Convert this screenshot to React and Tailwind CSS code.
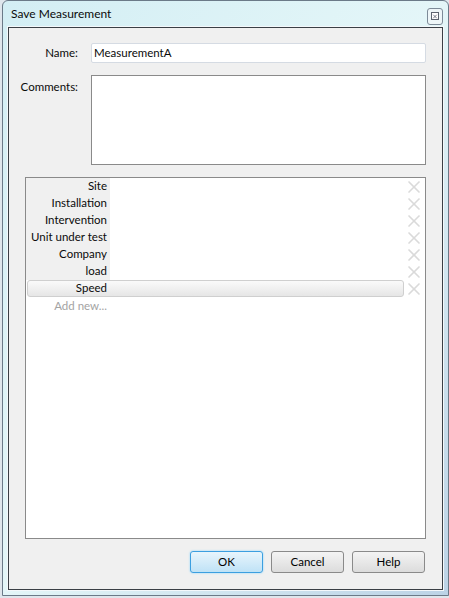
import { X } from "lucide-react"

const fields = ["Site", "Installation", "Intervention", "Unit under test", "Company", "load", "Speed"]

function Row({ label, selected }) {
    return (
        <div className="relative flex h-[17px] items-center">
            {selected && (
                <div className="absolute left-[1px] top-0 h-[17px] w-[377px] rounded-[3px] border border-[#cfcfcf] bg-gradient-to-b from-[#fafafa] to-[#e6e6e6]" />
            )}
            <div className={`relative h-full w-[84px] pr-[3px] text-right leading-[16px] ${selected ? '' : 'bg-[#f0f0f0]'}`}>
                {label}
            </div>
            <div className="flex-1" />
            <div className="relative flex w-[22px] justify-center">
                <X size={20} strokeWidth={2} className="text-[#dadada]" />
            </div>
        </div>
    )
}

function Btn({ children, primary }) {
    return (
        <button
            className={`h-[22px] w-[73px] rounded-[3px] border text-[11.5px] text-black ${
                primary
                    ? 'border-[#3c9fe0] bg-gradient-to-b from-[#e8f5fc] to-[#bfe2f6] shadow-[0_0_2px_#7fd0ff]'
                    : 'border-[#8a8a8a] bg-gradient-to-b from-[#f4f4f4] to-[#dcdcdc]'
            }`}
        >
            {children}
        </button>
    )
}

export default function App() {
    return (
        <div className="h-[598px] w-[449px] bg-[#dfe6ec] pl-[2px] font-['Lato',sans-serif] text-[11.5px] text-[#0a0a0a]">
            <div className="flex h-[596px] w-[447px] flex-col rounded-t-[6px] border border-[#6b7a88] bg-gradient-to-br from-[#d3eef4] via-[#e4f6f8] to-[#bcd3e6]">
                {/* title bar */}
                <div className="flex h-[26px] items-center justify-between pl-[8px] pr-[5px]">
                    <span className="text-[12px] text-[#0b0b0b]">Save Measurement</span>
                    <div className="mt-[4px] flex h-[17px] w-[16px] items-center justify-center rounded-[3px] border border-[#7d8b98] bg-[#eef6f8]">
                        <div className="flex h-[8px] w-[8px] items-center justify-center border border-[#5c6470] bg-white">
                            <X size={7} strokeWidth={3} className="text-[#4a5260]" />
                        </div>
                    </div>
                </div>

                {/* client */}
                <div className="mx-[5px] flex h-[563px] flex-col border border-[#3a3f45] bg-[#f0f0f0] shadow-[0_0_0_1px_#f4f8fb]">
                    <div className="mt-[15px] flex items-center">
                        <div className="w-[69px] text-right">Name:</div>
                        <div className="ml-[13px] flex h-[20px] w-[335px] items-center rounded-[2px] border border-[#d5dbe3] bg-white pl-[2px]">
                            MeasurementA
                        </div>
                    </div>

                    <div className="mt-[12px] flex items-start">
                        <div className="mt-[3px] w-[69px] text-right">Comments:</div>
                        <div className="ml-[13px] h-[90px] w-[335px] border border-[#8a8a8a] bg-white" />
                    </div>

                    <div className="ml-[16px] mt-[12px] h-[362px] w-[401px] border border-[#8a8a8a] bg-white">
                        {fields.map((f) => (
                            <Row key={f} label={f} selected={f === "Speed"} />
                        ))}
                        <div className="flex h-[17px] items-center">
                            <div className="w-[84px] pr-[3px] text-right leading-[16px] text-[#a3a3a3]">Add new...</div>
                        </div>
                    </div>

                    <div className="ml-[181px] mt-[12px] flex gap-[8px]">
                        <Btn primary>OK</Btn>
                        <Btn>Cancel</Btn>
                        <Btn>Help</Btn>
                    </div>
                </div>
            </div>
        </div>
    )
}
